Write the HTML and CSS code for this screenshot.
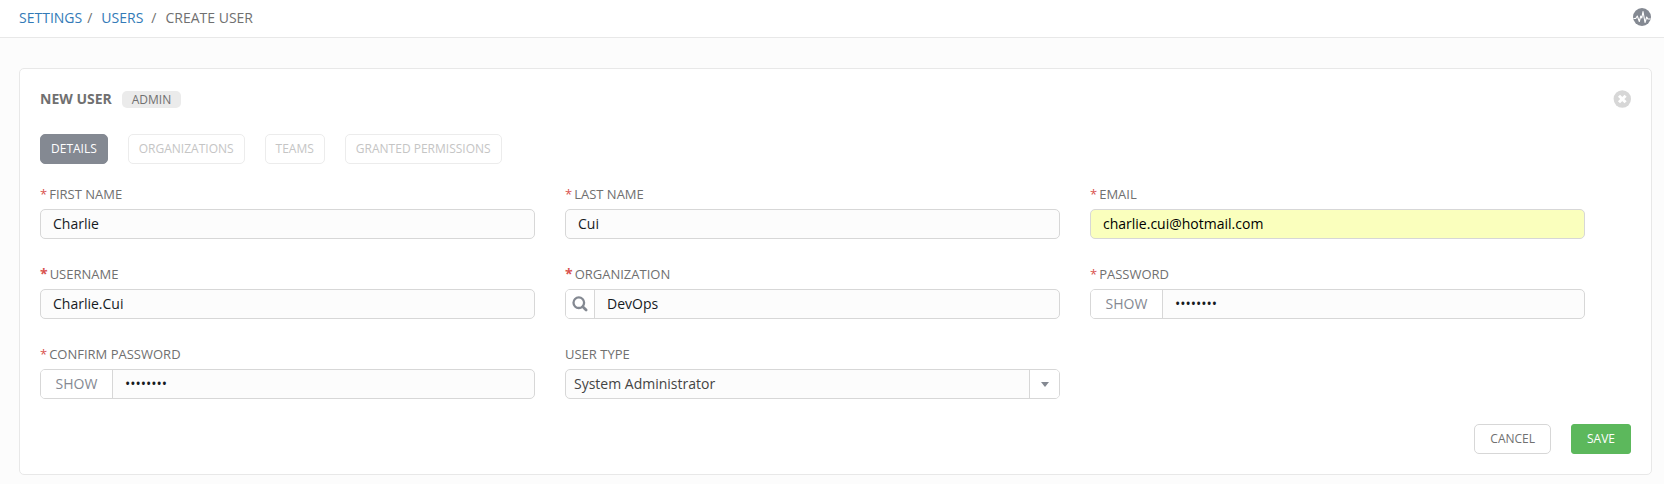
FILE: index.html
```html
<!DOCTYPE html>
<html lang="en">
<head>
<meta charset="utf-8">
<title>Create User</title>
<link rel="stylesheet" href="styles.css">
</head>
<body>
<header class="topbar">
  <nav class="crumbs"><a href="#">SETTINGS</a><span class="sep first">/</span><a href="#">USERS</a><span class="sep">/</span><span>CREATE USER</span></nav>
  <svg class="activity" width="18" height="18" viewBox="0 0 18 18"><circle cx="9" cy="9" r="9" fill="#848992"/><path d="M0.500 10.500h2.200l1.600-2.500 2 5.500 1.500-5.500 1 2 1.200-6.500 2 11 1.700-5.500 1.200 2h2.600" fill="none" stroke="#fff" stroke-width="1.100" stroke-linejoin="round"/></svg>
</header>
<main class="card">
  <div class="title-row">
    <h1 class="title">NEW USER</h1><span class="badge">ADMIN</span>
    <svg class="close" width="18" height="18" viewBox="0 0 18 18"><circle cx="9.300" cy="9" r="8.700" fill="#d7d7d7"/><path d="M6 5.700l6.600 6.600M12.600 5.700l-6.600 6.600" stroke="#fff" stroke-width="3"/></svg>
  </div>
  <div class="tabs">
    <button class="btn tab active">DETAILS</button>
    <button class="btn tab">ORGANIZATIONS</button>
    <button class="btn tab">TEAMS</button>
    <button class="btn tab">GRANTED PERMISSIONS</button>
  </div>
  <form class="grid">
    <div class="field"><label class="label"><span class="req">*</span>FIRST NAME</label><div class="control"><span class="value">Charlie</span></div></div>
    <div class="field"><label class="label"><span class="req">*</span>LAST NAME</label><div class="control"><span class="value">Cui</span></div></div>
    <div class="field"><label class="label"><span class="req">*</span>EMAIL</label><div class="control filled"><span class="value">charlie.cui@hotmail.com</span></div></div>
    <div class="field"><label class="label"><span class="req strong">*</span>USERNAME</label><div class="control"><span class="value">Charlie.Cui</span></div></div>
    <div class="field"><label class="label"><span class="req strong">*</span>ORGANIZATION</label><div class="control"><span class="addon lookup"><svg width="16" height="16" viewBox="0 0 16 16"><circle cx="6.800" cy="6.700" r="5.300" fill="none" stroke="#848992" stroke-width="2.300"/><path d="M10.800 10.700l3.300 3.300" stroke="#848992" stroke-width="2.700" stroke-linecap="round"/></svg></span><span class="value">DevOps</span></div></div>
    <div class="field"><label class="label"><span class="req">*</span>PASSWORD</label><div class="control"><span class="addon show">SHOW</span><span class="value">••••••••</span></div></div>
    <div class="field"><label class="label"><span class="req">*</span>CONFIRM PASSWORD</label><div class="control"><span class="addon show">SHOW</span><span class="value">••••••••</span></div></div>
    <div class="field"><label class="label">USER TYPE</label><div class="control select"><span class="value">System Administrator</span><span class="arrow"><svg width="8" height="5" viewBox="0 0 8 5"><path d="M0 0h8L4 5z" fill="#848992"/></svg></span></div></div>
  </form>
  <div class="actions">
    <button class="btn cancel">CANCEL</button>
    <button class="btn save">SAVE</button>
  </div>
</main>
</body>
</html>
```
FILE: styles.css
```css
* { box-sizing: border-box; }
body {
  margin: 0;
  height: 484px;
  background: #fcfcfc;
  color: #707070;
  font: 14px/20px "Open Sans", sans-serif;
}
.topbar {
  display: flex;
  align-items: center;
  justify-content: space-between;
  height: 38px;
  padding: 0 13px 2px 19px;
  background: #fff;
  border-bottom: 1px solid #e8e8e8;
}
.crumbs { display: flex; }
.crumbs a { color: #337ab7; text-decoration: none; }
.sep { padding: 0 9px 0 8px; }
.sep.first { padding-left: 5px; }
.activity { margin-top: -1px; }
.card {
  margin: 30px 12px 0 19px;
  height: 407px;
  padding: 20px;
  background: #fff;
  border: 1px solid #e8e8e8;
  border-radius: 5px;
}
.title-row { display: flex; align-items: center; height: 20px; }
.title { margin: 0; font-size: 14px; font-weight: 700; }
.badge {
  height: 17px;
  margin-left: 10px;
  padding: 0 10px;
  border-radius: 5px;
  background: #ebebeb;
  font-size: 12px;
  line-height: 17px;
}
.close { margin-left: auto; }
.tabs { display: flex; gap: 20px; margin-top: 25px; }
.btn {
  height: 30px;
  padding: 0 10px;
  border: 1px solid #ececec;
  border-radius: 5px;
  background: #fff;
  color: #c5c5c5;
  font: 12px/28px "Open Sans", sans-serif;
}
.tab.active { background: #848992; border-color: #848992; color: #fff; }
.grid {
  display: grid;
  grid-template-columns: repeat(3, 495px);
  gap: 30px;
  margin-top: 20px;
}
.field { display: flex; flex-direction: column; gap: 5px; height: 50px; }
.label { height: 20px; font-size: 13px; line-height: 20px; white-space: nowrap; }
.req { margin-right: 2px; color: #d9534f; }
.req.strong { font-size: 14px; line-height: 1; font-weight: 700; }
.control {
  display: flex;
  flex: none;
  height: 30px;
  overflow: hidden;
  border: 1px solid #d7d7d7;
  border-radius: 5px;
  background: #fcfcfc;
  color: #161b1f;
  line-height: 28px;
}
.filled { background: #faffbd; color: #000; }
.value { flex: 1; padding-left: 12px; }
.addon, .arrow { display: flex; align-items: center; justify-content: center; background: #fff; }
.addon { border-right: 1px solid #d7d7d7; color: #848992; }
.lookup { width: 29px; }
.show { width: 72px; }
.select { color: #444; }
.select .value { padding-left: 8px; }
.arrow { width: 30px; border-left: 1px solid #d7d7d7; }
.actions { display: flex; justify-content: flex-end; gap: 20px; margin-top: 30px; }
.cancel { padding: 0 15px; border-color: #d7d7d7; color: #707070; }
.save { padding: 0 15px; border-color: #5cb85c; border-radius: 3px; background: #5cb85c; color: #fff; }
```
